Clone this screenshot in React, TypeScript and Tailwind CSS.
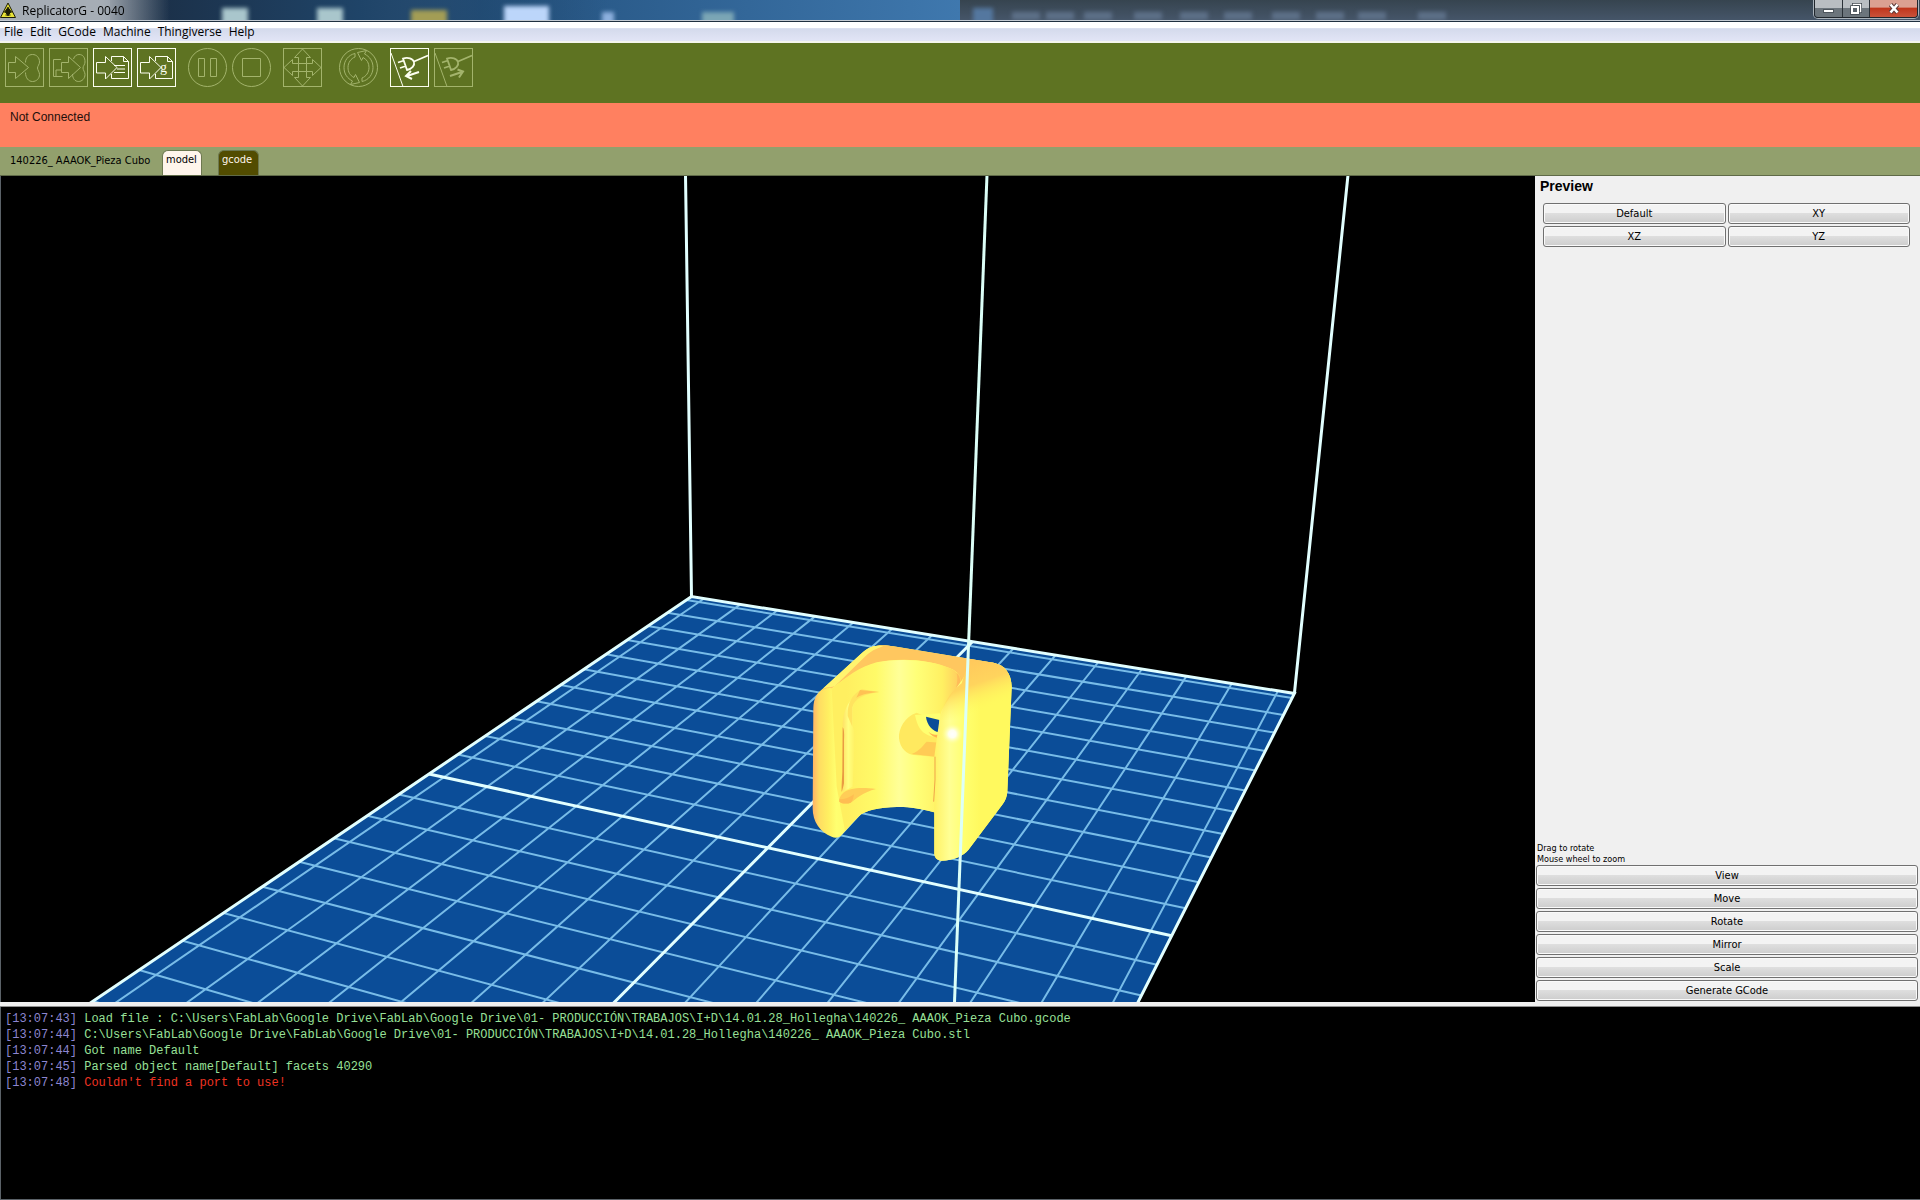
import type { ReactNode } from "react";

const uiFont = "font-['DejaVu_Sans_Condensed','DejaVu_Sans',sans-serif] [font-stretch:condensed]";

/* ---------- Title bar ---------- */

function TitleBar() {
  return (
    <header className="relative flex h-[22px] shrink-0 items-start overflow-hidden border-b border-[#20303f] bg-[#42525f]">
      <div className="absolute inset-0 bg-linear-to-b from-[#36444f] to-[#46566a]" />
      <div className="absolute inset-y-0 left-0 w-1/2 bg-linear-to-r from-[#8a9099] via-[#24527f] to-[#3f78ae]" />
      <div className="absolute inset-y-0 left-[110px] w-[500px] bg-linear-to-r from-[#1a2c42] via-[#1f4468] to-transparent" />
      <div className="absolute inset-0 blur-[2px]">
        <span className="absolute left-[222px] top-2 h-5 w-[26px] bg-[#a9c6cc]" />
        <span className="absolute left-[317px] top-2 h-5 w-[26px] bg-[#a9c6cc]" />
        <span className="absolute left-[411px] top-2.5 h-5 w-9 bg-[#a39d55]" />
        <span className="absolute left-[504px] top-1.5 h-5 w-[45px] bg-[#bcd6fa]" />
        <span className="absolute left-[602px] top-3 h-4 w-3 bg-[#8db0de]" />
        <span className="absolute left-[702px] top-3 h-4 w-8 bg-[#7ba6b5]" />
        <span className="absolute left-[973px] top-2 h-4 w-5 bg-[#54779f]" />
        {[1012, 1046, 1084, 1134, 1180, 1224, 1272, 1316, 1358, 1418].map((x) => (
          <span key={x} className="absolute top-3 h-2 w-7 bg-[#5d7088]" style={{ left: x }} />
        ))}
      </div>
      <div className="absolute inset-y-0 left-0 w-[170px] bg-linear-to-r from-[#a6adb5] from-60% to-transparent" />
      <svg className="relative mt-0.5 h-4 w-4 shrink-0" viewBox="0 0 16 16" aria-hidden="true">
        <path d="M8 1 15.5 15.5H.5Z" fill="#e8e337" stroke="#1d1d05" strokeWidth="1" />
        <path d="M8 5.5 11 9.500 8 13.500 5 9.500ZM3.500 10h9M8 5v9M5.500 13h5" fill="#1d1d05" stroke="#1d1d05" />
      </svg>
      <h1 className="relative ml-[6px] mt-px flex-1 font-['Open_Sans',sans-serif] text-[12px] leading-5 text-black">
        ReplicatorG - 0040
      </h1>
      <div className="absolute inset-x-0 bottom-0 h-px bg-[#c3cad2]" />
      <div className="relative mr-0.5 flex h-[18px] overflow-hidden rounded-b border border-t-0 border-[#20262c] shadow-[0_0_0_1px_#a9b2ba]">
        <button aria-label="Minimize" className="flex w-7 items-end justify-center border-r border-[#2b3238] bg-linear-to-b from-[#b9bec2] from-45% to-[#6c757c] to-50% pb-1">
          <span className="h-1 w-[11px] border border-[#4d555c] bg-white" />
        </button>
        <button aria-label="Restore" className="flex w-[27px] items-center justify-center border-r border-[#2b3238] bg-linear-to-b from-[#b9bec2] from-45% to-[#6c757c] to-50%">
          <svg className="h-3 w-3" viewBox="0 0 12 12" aria-hidden="true">
            <path d="M3.500 3V1.500h7v7H9" fill="none" stroke="#3f474e" strokeWidth="3" />
            <path d="M3.500 3V1.500h7v7H9" fill="none" stroke="#fff" strokeWidth="1.500" />
            <rect x="2" y="4" width="6" height="6" fill="#59626a" stroke="#3f474e" strokeWidth="3.500" />
            <rect x="2" y="4" width="6" height="6" fill="#59626a" stroke="#fff" strokeWidth="2" />
          </svg>
        </button>
        <button aria-label="Close" className="flex w-[47px] items-center justify-center bg-linear-to-b from-[#dba091] from-40% via-[#c0361c] via-50% to-[#c9523a]">
          <svg className="h-[11px] w-[12px]" viewBox="0 0 12 11" aria-hidden="true">
            <path d="M2.500 1.500l7 8M9.500 1.500l-7 8" stroke="#5a3a38" strokeWidth="4.500" />
            <path d="M2.500 1.500l7 8M9.500 1.500l-7 8" stroke="#fff" strokeWidth="2.600" />
          </svg>
        </button>
      </div>
    </header>
  );
}

/* ---------- Menu bar ---------- */

function MenuBar() {
  return (
    <nav className="flex h-[21px] shrink-0 items-center gap-[7px] border-b-2 border-[#f4f5ee] bg-linear-to-b from-white from-30% via-[#d4daec] via-35% to-[#e2e5f6] pl-1 font-['Open_Sans',sans-serif] text-[12px] leading-4 text-black">
      {["File", "Edit", "GCode", "Machine", "Thingiverse", "Help"].map((m) => (
        <button key={m}>{m}</button>
      ))}
    </nav>
  );
}

/* ---------- Toolbar ---------- */

function ToolButton({ label, enabled, round, className = "", children }: {
  label: string; enabled?: boolean; round?: boolean; className?: string; children: ReactNode;
}) {
  return (
    <button aria-label={label} disabled={!enabled} className={`h-[39px] w-[39px] ${enabled ? "text-[#fdfff0]" : "text-[#a3b46c]"} ${className}`}>
      <svg viewBox="0 0 39 39" className="h-full w-full" fill="none" stroke="currentColor" strokeWidth="1" aria-hidden="true">
        {round ? <circle cx="19.500" cy="19.500" r="19" /> : <rect x=".5" y=".5" width="38" height="38" />}
        {children}
      </svg>
    </button>
  );
}

const Doc = () => (
  <>
    <path d="M3.500 14.500h9v-6L24 19.500 12.500 31v-6h-9z" />
    <path d="M18.500 13V8.500h12l5 5v17h-17V26M30.500 8.500v5h5" />
  </>
);

const Plug = () => (
  <>
    <path d="M1 5l12 33.500" />
    <path d="M13 10.500l4 11.500c5-1 8-4.500 7-8s-6-5-11-3.500zM8 14.500l6-2M10 20l6-2M24 13.500L38 7.500" strokeWidth="1.800" />
  </>
);

function Toolbar() {
  return (
    <div role="toolbar" aria-label="Machine" className="flex h-[60px] shrink-0 items-start gap-[5px] bg-[#5e7322] pl-[5px] pt-[5px]">
      <ToolButton label="Build">
        <path d="M3.500 14.500h7v-6l13 11-13 11v-6h-7z" />
        <path d="M20.500 14.500c0-5 3-8 7-8s7 3 7 7.500c0 2.500-2 4-2 6s2 4 2 6.500c0 4-3 7-7 7s-7-3.500-7-9" />
      </ToolButton>
      <ToolButton label="Build to file">
        <path d="M12 11.500H4.500v17h9M7 28v-6h5M12.500 14.500h7v-6l12 11-12 11v-6h-7z" />
        <path d="M24.500 11c1-3 3-4.500 5.500-4.500 4 0 6 3 6 7.500 0 2.500-2 4-2 6s2 4 2 6.500c0 4-3 7-6.500 7s-6-3-6-7.500" />
      </ToolButton>
      <ToolButton label="Generate file" enabled>
        <Doc />
        <path d="M21 17.500h11M24 21h8M21 24.500h11" />
      </ToolButton>
      <ToolButton label="Build G-code" enabled>
        <Doc />
        <text x="23" y="24" fontSize="14" fill="currentColor" stroke="none" fontFamily="Liberation Serif, serif">g</text>
      </ToolButton>
      <ToolButton label="Pause" round className="ml-[7px]">
        <path d="M10.500 10.500h6v18h-6zM22.500 10.500h6v18h-6z" />
      </ToolButton>
      <ToolButton label="Stop" round>
        <path d="M10.500 10.500h18v18h-18z" />
      </ToolButton>
      <ToolButton label="Control panel" className="ml-[7px]">
        <path d="M19.500 1l8 8.500h-4v6h6v-4l8.500 8-8.500 8v-4h-6v6h4l-8 8.500-8-8.500h4v-6h-6v4L1 19.500l8.500-8v4h6v-6h-4zM15.500 15.500h8v8h-8z" />
      </ToolButton>
      <ToolButton label="Reset" round className="ml-[12px]">
        <path d="M16 5.500C9 7 5 13 5 19.500 5 26 8.500 30.500 13.500 33l-2 3.500 9-2-4-8-1.500 3c-4-2-6-5.500-6-10 0-5 3-9 7-10.500z" />
        <path d="M23 33.500c7-1.500 11-7.500 11-14 0-6.500-3.500-11-8.500-13.500l2-3.500-9 2 4 8 1.500-3c4 2 6 5.500 6 10 0 5-3 9-7 10.500z" />
      </ToolButton>
      <ToolButton label="Connect" enabled className="ml-[7px]">
        <Plug />
        <path d="M29 24l-12 4M21 23l-5 5 6 3" strokeWidth="2" />
      </ToolButton>
      <ToolButton label="Disconnect">
        <Plug />
        <path d="M16 28l12-4M23.500 21.500l5.500 2-4 6" strokeWidth="2" />
      </ToolButton>
    </div>
  );
}

/* ---------- 3D preview ---------- */

type Pt = [number, number];

/* Build platform in centimetres: u runs across, v towards the back. */
const HALF_WIDTH = 7.35;
const DEPTH = 11.28;
const MID_LEFT: Pt = [429, 774];
const MID_RIGHT: Pt = [1171.700, 935.700];
const BACK_RIGHT: Pt = [1294.400, 693.500];
const BACK_LEFT: Pt = [691.500, 596.500];

function project(u: number, v: number): Pt {
  const s = (u + HALF_WIDTH) / (2 * HALF_WIDTH);
  const t = v / DEPTH;
  const dx1 = MID_RIGHT[0] - BACK_RIGHT[0];
  const dx2 = BACK_LEFT[0] - BACK_RIGHT[0];
  const dx3 = MID_LEFT[0] - MID_RIGHT[0] + BACK_RIGHT[0] - BACK_LEFT[0];
  const dy1 = MID_RIGHT[1] - BACK_RIGHT[1];
  const dy2 = BACK_LEFT[1] - BACK_RIGHT[1];
  const dy3 = MID_LEFT[1] - MID_RIGHT[1] + BACK_RIGHT[1] - BACK_LEFT[1];
  const det = dx1 * dy2 - dx2 * dy1;
  const g = (dx3 * dy2 - dx2 * dy3) / det;
  const h = (dx1 * dy3 - dx3 * dy1) / det;
  const w = 1 + g * s + h * t;
  const axis = (i: 0 | 1) =>
    (MID_LEFT[i] +
      (MID_RIGHT[i] - MID_LEFT[i] + g * MID_RIGHT[i]) * s +
      (BACK_LEFT[i] - MID_LEFT[i] + h * BACK_LEFT[i]) * t) / w;
  return [axis(0), axis(1)];
}

function seg(u1: number, v1: number, u2: number, v2: number) {
  const a = project(u1, v1);
  const b = project(u2, v2);
  return `M${a[0].toFixed(1)} ${a[1].toFixed(1)}L${b[0].toFixed(1)} ${b[1].toFixed(1)}`;
}

const range = (from: number, to: number) =>
  Array.from({ length: to - from + 1 }, (_, i) => from + i).filter((n) => n !== 0);

const grid = [
  ...range(-7, 7).map((u) => seg(u, -DEPTH, u, DEPTH)),
  ...range(-11, 11).map((v) => seg(-HALF_WIDTH, v, HALF_WIDTH, v)),
].join("");
const axes = seg(0, -DEPTH, 0, DEPTH) + seg(-HALF_WIDTH, 0, HALF_WIDTH, 0);
const floor = [project(-HALF_WIDTH, -DEPTH), project(-HALF_WIDTH, DEPTH), project(HALF_WIDTH, DEPTH), project(HALF_WIDTH, -DEPTH)]
  .map((p) => p.join(","))
  .join(" ");

function Part() {
  return (
    <g transform="translate(780 620) scale(.33333)">
      <defs>
        <linearGradient id="face" x1="100" x2="215" gradientUnits="userSpaceOnUse">
          <stop offset="0" stopColor="#ffb765" />
          <stop offset=".15" stopColor="#ffdc62" />
          <stop offset=".4" stopColor="#fff061" />
          <stop offset=".6" stopColor="#ffff70" />
          <stop offset="1" stopColor="#fffa68" />
        </linearGradient>
        <linearGradient id="bore" x1="200" x2="550" gradientUnits="userSpaceOnUse">
          <stop offset="0" stopColor="#ffef60" />
          <stop offset=".25" stopColor="#fffa68" />
          <stop offset=".45" stopColor="#ffff98" />
          <stop offset=".6" stopColor="#ffff78" />
          <stop offset=".82" stopColor="#fff062" />
          <stop offset="1" stopColor="#ffc45e" />
        </linearGradient>
        <linearGradient id="arm" x1="462" x2="695" gradientUnits="userSpaceOnUse">
          <stop offset="0" stopColor="#fff163" />
          <stop offset=".2" stopColor="#ffff94" />
          <stop offset=".4" stopColor="#ffff6e" />
          <stop offset=".6" stopColor="#fff95e" />
          <stop offset="1" stopColor="#fff95e" />
        </linearGradient>
        <linearGradient id="shoulder" x1="560" y1="130" x2="610" y2="270" gradientUnits="userSpaceOnUse">
          <stop offset="0" stopColor="#ffc95c" />
          <stop offset=".45" stopColor="#ffd45d" />
          <stop offset="1" stopColor="#fff95e" stopOpacity="0" />
        </linearGradient>
        <linearGradient id="channel" x1="185" x2="225" gradientUnits="userSpaceOnUse">
          <stop offset="0" stopColor="#ffdc60" />
          <stop offset=".5" stopColor="#ffff80" />
          <stop offset="1" stopColor="#fff062" />
        </linearGradient>
        <radialGradient id="glint">
          <stop offset="0" stopColor="#fff" />
          <stop offset=".35" stopColor="#fffff0" />
          <stop offset="1" stopColor="#ffff90" stopOpacity="0" />
        </radialGradient>
      </defs>
      <path
        fill="url(#face)"
        d="M292 77C310 74 325 77 340 79L640 128C675 135 694 160 695 200L682 515C681 530 676 542 668 553L565 690C552 707 520 722 485 722C470 722 463 712 463 700V577C420 565 385 560 350 561C300 563 255 570 235 590L185 645C178 654 165 655 155 650C120 637 98 605 98 565L100 265C101 235 110 220 130 205L245 100C262 84 275 78 292 77Z"
      />
      <path fill="#ffc75f" d="M292 77C310 74 325 77 340 79L640 128L560 250L505 245C555 215 560 165 510 145C440 115 340 110 270 135C225 152 190 180 155 205C140 202 135 207 120 215Z" />
      <path fill="#fff46e" d="M292 77C275 78 262 84 245 100L130 205C145 200 155 203 165 198L250 115C275 90 285 88 310 78Z" />
      <path
        fill="url(#bore)"
        d="M155 207C200 170 240 140 290 127C360 113 460 120 510 145C560 165 545 225 500 255L470 300V579C420 565 385 560 350 561C300 563 255 570 235 590L195 632L170 500Z"
      />
      <path fill="#ffad54" opacity=".55" d="M530 158C548 170 549 190 546 202C540 212 530 220 520 225C530 205 535 180 530 158Z" />
      <path fill="url(#channel)" d="M188 320C188 290 195 262 213 240C225 225 242 218 297 216C255 222 225 238 219 262V320L225 345L218 500L188 515Z" />
      <path fill="#ffe35f" d="M203 288C202 250 215 225 245 208L298 216C250 221 223 236 217 262V320Z" />
      <path fill="#ffc253" d="M240 210L297 216C270 218 245 223 229 233Z" />
      <path fill="#e99b43" d="M188 322C192 325 193 340 192 358V490C190 500 188 508 185 516C184 500 186 480 187 455Z" />
      <path fill="#ffcd57" d="M178 537C180 530 184 524 190 518C205 505 240 500 288 507C250 515 225 540 212 548C200 553 185 551 178 545Z" />
      <path fill="#ffbd52" d="M178 538C195 538 210 532 222 523C220 535 218 543 212 548C200 553 185 551 178 545Z" />
      <path fill="#ffe95f" d="M410 278C375 290 355 325 357 355C360 385 380 403 402 405L475 412V340L440 290Z" />
      <path fill="#ffcb55" d="M395 402C420 392 430 375 440 365L480 368V412Z" />
      <path fill="#ffff70" d="M405 285C415 335 435 350 480 352V280Z" />
      <path fill="#0b4d98" d="M438 290L478 300V336C462 338 440 315 438 290Z" />
      <path fill="#ffb34e" d="M445 335C455 345 470 345 480 344V356C465 352 452 346 445 335Z" />
      <path fill="url(#arm)" d="M640 128C675 135 694 160 695 200L682 515C681 530 676 542 668 553L565 690C552 707 520 722 485 722C470 722 463 712 463 700V410C470 360 475 320 480 290C490 240 560 180 570 130Z" />
      <path fill="url(#shoulder)" d="M568 117L640 128C675 135 694 160 695 200L690 240L640 300H480C490 240 520 210 545 190Z" />
      <path stroke="#f0a54a" strokeWidth="3" d="M465 410V480L461 545" fill="none" />
      <circle cx="517" cy="342" r="32" fill="url(#glint)" />
    </g>
  );
}

function Viewport() {
  return (
    <svg className="h-full w-full" viewBox="1 176 1534 826" preserveAspectRatio="xMidYMid slice" role="img" aria-label="Model preview">
      <rect y="176" width="1535" height="826" fill="#000" />
      <polygon points={floor} fill="#0b4d98" />
      <path d={grid} stroke="#78bce8" strokeWidth="2" fill="none" />
      <path d={axes} stroke="#e2ffff" strokeWidth="3" fill="none" />
      <polygon points={floor} fill="none" stroke="#e2ffff" strokeWidth="3" />
      <path d="M685.500 175L691.500 596.500M1348 175L1294.400 693.500" stroke="#e2ffff" strokeWidth="3" />
      <Part />
      <path d="M987 175L954.500 1002" stroke="#dcfff8" strokeWidth="3" />
    </svg>
  );
}

/* ---------- Side panel ---------- */

function PanelButton({ children }: { children: ReactNode }) {
  return (
    <button className="h-[21px] w-full rounded-[3px] border border-[#707070] bg-linear-to-b from-[#f3f3f3] from-45% via-[#dedede] via-50% to-[#cdcdcd] text-center leading-4 shadow-[inset_0_0_0_1px_#fafafa]">
      {children}
    </button>
  );
}

function SidePanel() {
  return (
    <aside className={`flex w-[385px] shrink-0 flex-col bg-[#f0f0f0] pr-0.5 text-[11px] text-black ${uiFont}`}>
      <h2 className="pl-[5px] pt-px font-['Liberation_Sans',sans-serif] text-[14px] leading-[18px] font-bold [font-stretch:normal]">Preview</h2>
      <div className="mt-2 grid grid-cols-2 gap-0.5 px-2">
        {["Default", "XY", "XZ", "YZ"].map((v) => (
          <PanelButton key={v}>{v}</PanelButton>
        ))}
      </div>
      <p className="mt-auto pl-0.5 text-[9px] leading-[11px]">
        Drag to rotate
        <br />
        Mouse wheel to zoom
      </p>
      <div className="flex flex-col gap-0.5 pb-px pl-px">
        {["View", "Move", "Rotate", "Mirror", "Scale", "Generate GCode"].map((v) => (
          <PanelButton key={v}>{v}</PanelButton>
        ))}
      </div>
    </aside>
  );
}

/* ---------- Console ---------- */

const log = [
  { time: "13:07:43", text: "Load file : C:\\Users\\FabLab\\Google Drive\\FabLab\\Google Drive\\01- PRODUCCIÓN\\TRABAJOS\\I+D\\14.01.28_Hollegha\\140226_ AAAOK_Pieza Cubo.gcode" },
  { time: "13:07:44", text: "C:\\Users\\FabLab\\Google Drive\\FabLab\\Google Drive\\01- PRODUCCIÓN\\TRABAJOS\\I+D\\14.01.28_Hollegha\\140226_ AAAOK_Pieza Cubo.stl" },
  { time: "13:07:44", text: "Got name Default" },
  { time: "13:07:45", text: "Parsed object name[Default] facets 40290" },
  { time: "13:07:48", text: "Couldn't find a port to use!", error: true },
];

function Console() {
  return (
    <section aria-label="Log" className="h-[193px] shrink-0 border-b border-l border-[#5b6268] bg-black pl-1 pt-1 font-['Liberation_Mono',monospace] text-[12px] leading-4 whitespace-pre">
      {log.map((l, i) => (
        <p key={i} className={l.error ? "text-[#ee3322]" : "text-[#98e098]"}>
          <span className="text-[#8d86d0]">[{l.time}]</span> {l.text}
        </p>
      ))}
    </section>
  );
}

export default function App() {
  return (
    <div className="flex h-screen flex-col overflow-hidden bg-black">
      <TitleBar />
      <MenuBar />
      <Toolbar />
      <div role="status" className="h-11 shrink-0 bg-[#ff8060] pl-[10px] pt-[6px] font-['Liberation_Sans',sans-serif] text-[12px] leading-4 text-[#1e0f0b]">
        Not Connected
      </div>
      <div className={`flex h-[29px] shrink-0 items-end border-b border-[#5f6a48] bg-[#92a06d] pl-[10px] text-[11px] leading-4 text-black ${uiFont}`}>
        <span className="w-[152px] pb-[6px]">140226_ AAAOK_Pieza Cubo</span>
        <div role="tablist" className="flex gap-4">
          <button role="tab" aria-selected="true" className="h-[25px] w-10 rounded-t-md border border-b-0 border-[#6d7850] bg-[#fff5eb] pb-[6px] pl-[3px] text-left">model</button>
          <button role="tab" aria-selected="false" className="h-[25px] w-[41px] rounded-t-md border border-b-0 border-[#6d7850] bg-[#524c00] pb-[6px] pl-[3px] text-left text-[#fff5eb]">gcode</button>
        </div>
      </div>
      <main className="flex min-h-0 flex-1">
        <div className="min-w-0 flex-1 border-l border-[#5b6268]">
          <Viewport />
        </div>
        <SidePanel />
      </main>
      <div className="h-[5px] shrink-0 border-b border-[#8f8f8f] bg-[#f0f0f0]" />
      <Console />
    </div>
  );
}
